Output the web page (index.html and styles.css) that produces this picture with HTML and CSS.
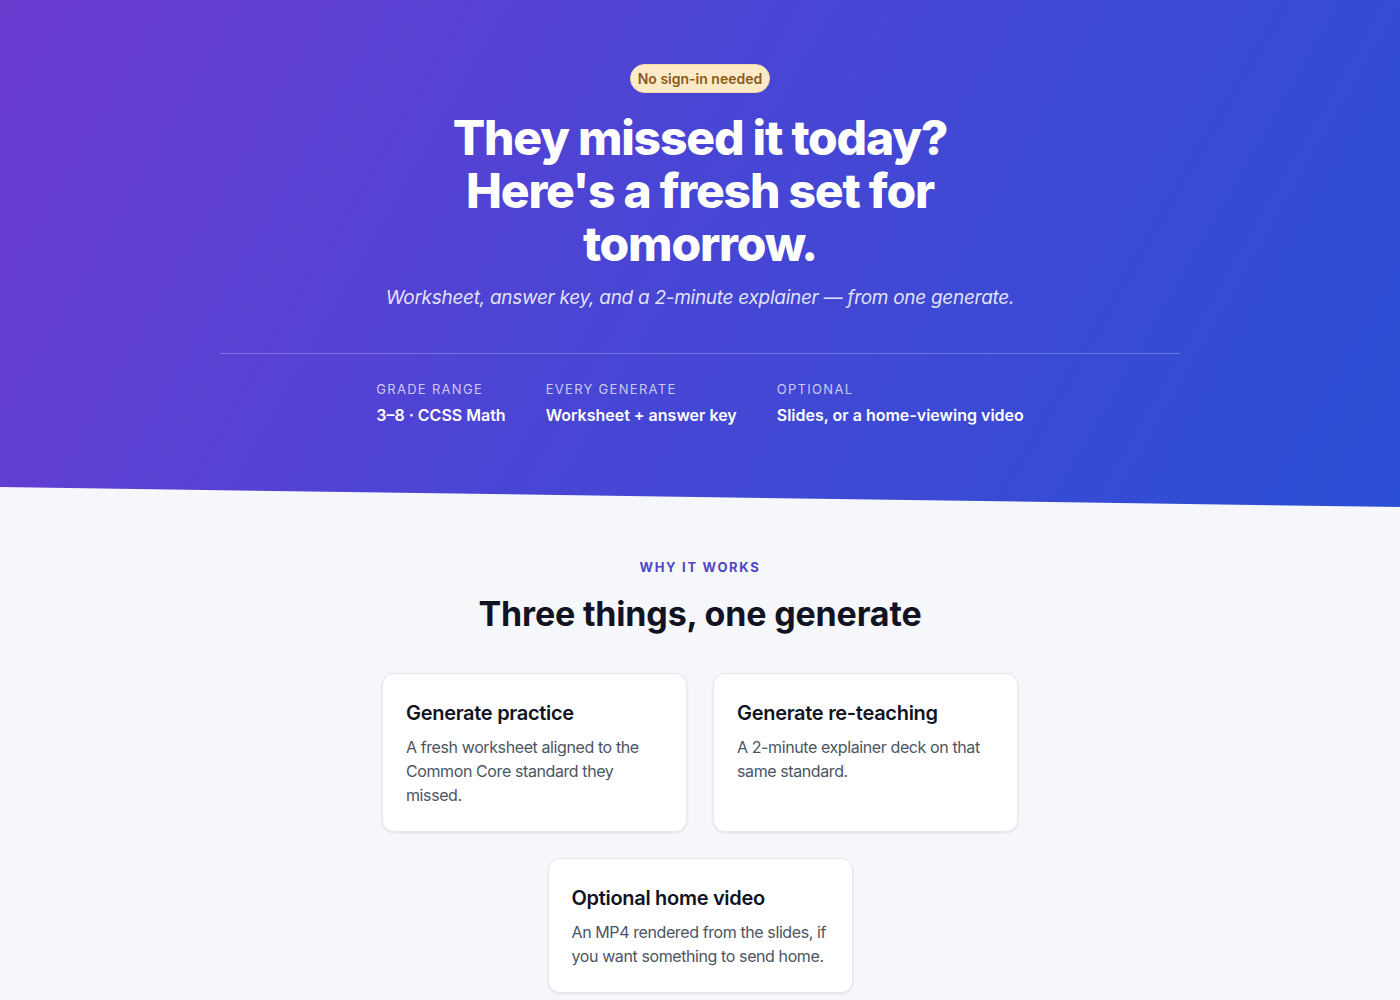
FILE: index.html
```html
<!DOCTYPE html>
<html lang="en">
<head>
<meta charset="utf-8">
<title>Fresh set for tomorrow</title>
<link rel="stylesheet" href="styles.css">
</head>
<body>
<header class="hero">
  <div class="hero-inner">
    <span class="badge">No sign-in needed</span>
    <h1 class="headline">They missed it today? Here's a fresh set for tomorrow.</h1>
    <p class="subtitle">Worksheet, answer key, and a 2-minute explainer — from one generate.</p>
    <div class="stats">
      <div class="stat">
        <div class="stat-label">Grade range</div>
        <div class="stat-value">3–8 · CCSS Math</div>
      </div>
      <div class="stat">
        <div class="stat-label">Every generate</div>
        <div class="stat-value">Worksheet + answer key</div>
      </div>
      <div class="stat">
        <div class="stat-label">Optional</div>
        <div class="stat-value">Slides, or a home-viewing video</div>
      </div>
    </div>
  </div>
</header>
<main class="section">
  <div class="eyebrow">Why it works</div>
  <h2 class="section-title">Three things, one generate</h2>
  <div class="cards">
    <div class="card">
      <h3 class="card-title">Generate practice</h3>
      <p class="card-text">A fresh worksheet aligned to the Common Core standard they missed.</p>
    </div>
    <div class="card">
      <h3 class="card-title">Generate re-teaching</h3>
      <p class="card-text">A 2-minute explainer deck on that same standard.</p>
    </div>
    <div class="card">
      <h3 class="card-title">Optional home video</h3>
      <p class="card-text">An MP4 rendered from the slides, if you want something to send home.</p>
    </div>
  </div>
</main>
</body>
</html>
```

FILE: styles.css
```css
* { box-sizing: border-box; }
html, body { margin: 0; padding: 0; }
body {
  font-family: Inter, "Noto Sans", "Liberation Sans", sans-serif;
  background: #f6f7fb;
  color: #111827;
}
.hero {
  background: linear-gradient(120deg, #6c3bd0 0%, #4a45d4 45%, #2b4fd4 100%);
  color: #fff;
  padding: 64px 24px 80px;
  clip-path: polygon(0 0, 100% 0, 100% 100%, 0 calc(100% - 20px));
}
.hero-inner {
  max-width: 960px;
  margin: 0 auto;
  display: flex;
  flex-direction: column;
  align-items: center;
  text-align: center;
}
.badge {
  display: inline-block;
  background: #fdebc8;
  color: #8a5a1c;
  font-size: 14px;
  font-weight: 600;
  line-height: 20px;
  padding: 4px 7px 3px;
  border-radius: 999px;
  border: 1px solid #f6d9a4;
}
.headline {
  margin: 18px 0 0;
  max-width: 580px;
  font-size: 48px;
  line-height: 53px;
  font-weight: 800;
  letter-spacing: -0.025em;
}
.subtitle {
  margin: 14px 0 0;
  font-size: 19px;
  line-height: 28px;
  font-style: italic;
  letter-spacing: -0.015em;
  color: rgba(255, 255, 255, 0.86);
}
.stats {
  align-self: stretch;
  margin-top: 41px;
  border-top: 1px solid rgba(255, 255, 255, 0.25);
  padding-top: 26px;
  display: flex;
  justify-content: center;
  gap: 40px;
  text-align: left;
}
.stat-label {
  font-size: 13px;
  line-height: 18px;
  letter-spacing: 0.1em;
  text-transform: uppercase;
  color: rgba(255, 255, 255, 0.72);
}
.stat-value {
  margin-top: 5px;
  font-size: 16px;
  line-height: 24px;
  font-weight: 600;
  color: #fff;
}
.section {
  padding: 50px 24px 40px;
  display: flex;
  flex-direction: column;
  align-items: center;
  text-align: center;
}
.eyebrow {
  font-size: 13px;
  line-height: 20px;
  font-weight: 700;
  letter-spacing: 0.13em;
  text-transform: uppercase;
  color: #4f46c4;
}
.section-title {
  margin: 17px 0 0;
  font-size: 34px;
  line-height: 40px;
  font-weight: 700;
  letter-spacing: -0.005em;
  color: #111322;
}
.cards {
  margin-top: 39px;
  max-width: 640px;
  display: flex;
  flex-wrap: wrap;
  justify-content: center;
  gap: 26px;
}
.card {
  width: 305px;
  background: #fff;
  border: 1px solid #e6e8ef;
  border-radius: 12px;
  box-shadow: 0 1px 3px rgba(17, 24, 39, 0.06), 0 1px 2px rgba(17, 24, 39, 0.04);
  padding: 25px 23px 24px;
  text-align: left;
}
.card-title {
  margin: 0;
  font-size: 20px;
  line-height: 28px;
  font-weight: 600;
  letter-spacing: -0.015em;
  color: #111322;
}
.card-text {
  margin: 8px 0 0;
  font-size: 16px;
  line-height: 24px;
  letter-spacing: -0.025em;
  color: #4b5563;
}
```
